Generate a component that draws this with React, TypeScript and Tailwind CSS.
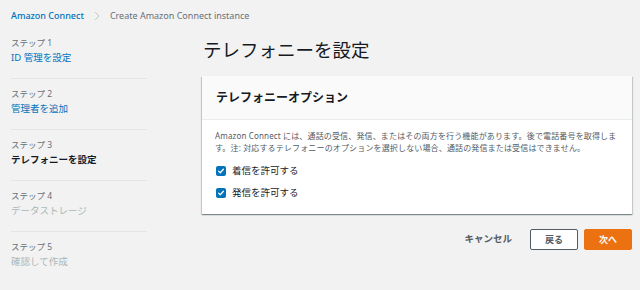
import React from "react";

const font = { fontFamily: '"Noto Sans", "Noto Sans CJK JP", sans-serif' };

type Step = {
  label: string;
  name: string;
  state: "done" | "active" | "todo";
};

const steps: Step[] = [
  { label: "ステップ 1", name: "ID 管理を設定", state: "done" },
  { label: "ステップ 2", name: "管理者を追加", state: "done" },
  { label: "ステップ 3", name: "テレフォニーを設定", state: "active" },
  { label: "ステップ 4", name: "データストレージ", state: "todo" },
  { label: "ステップ 5", name: "確認して作成", state: "todo" },
];

const nameClass = {
  done: "text-[#0073bb]",
  active: "text-[#16191f] font-bold",
  todo: "text-[#aab7b8]",
};

const CheckBox: React.FC<{ label: string }> = ({ label }) => (
  <label className="flex items-center gap-[6px] h-[16px]">
    <span className="w-[10px] h-[10px] rounded-[2px] bg-[#0073bb] flex items-center justify-center">
      <svg viewBox="0 0 10 10" className="w-[8px] h-[8px]">
        <path d="M2 5.2 L4.1 7.2 L8 2.8" fill="none" stroke="#fff" strokeWidth="1.6" strokeLinecap="round" strokeLinejoin="round" />
      </svg>
    </span>
    <span className="text-[9.5px] text-[#16191f] leading-[16px]">{label}</span>
  </label>
);

const App: React.FC = () => {
  return (
    <div className="w-full h-[290px] bg-[#f2f2f2] px-[11px] overflow-hidden" style={font}>
      {/* パンくず */}
      <div className="h-[28px] pt-[9px] flex items-start gap-[8px] text-[9px] leading-[14px]">
        <span className="text-[#0073bb] font-medium">Amazon Connect</span>
        <svg viewBox="0 0 8 12" className="w-[6px] h-[12px] mt-[1px] mx-[2px]">
          <path d="M1.5 1 L6.5 6 L1.5 11" fill="none" stroke="#aab7b8" strokeWidth="1" />
        </svg>
        <span className="text-[#687078]">Create Amazon Connect instance</span>
      </div>

      <div className="flex">
        {/* サイドバー */}
        <div className="w-[136px] shrink-0">
          {steps.map((s, i) => (
            <div
              key={s.label}
              className={`pt-[8px] ${i < steps.length - 1 ? "pb-[12px] border-b border-[#e4e6e6]" : ""}`}
            >
              <div className="text-[8.5px] leading-[14px] text-[#687078]">{s.label}</div>
              <div className={`text-[9.5px] leading-[16px] ${nameClass[s.state]}`}>{s.name}</div>
            </div>
          ))}
        </div>

        {/* メイン */}
        <div className="flex-1 ml-[55px] mr-[-3px] pt-[8px]">
          <h1 className="text-[18.5px] leading-[28px] text-[#16191f] pl-[1px]">テレフォニーを設定</h1>

          <div className="mt-[12px] bg-white shadow-[0_1px_1px_0_rgba(0,28,36,0.3),1px_1px_1px_0_rgba(0,28,36,0.15),-1px_1px_1px_0_rgba(0,28,36,0.15)]">
            <div className="h-[44px] bg-[#fafafa] border-b border-[#eaeded] px-[14px] flex items-center">
              <h2 className="text-[12px] font-bold text-[#16191f]">テレフォニーオプション</h2>
            </div>
            <div className="px-[13px] pt-[10px] pb-[13px]">
              <p className="text-[8px] tracking-[0.15px] leading-[12px] text-[#545b64]">
                Amazon Connect には、通話の受信、発信、またはその両方を行う機能があります。後で電話番号を取得します。注: 対応するテレフォニーのオプションを選択しない場合、通話の発信または受信はできません。
              </p>
              <div className="mt-[9px] flex flex-col gap-[6px] pl-[1px]">
                <CheckBox label="着信を許可する" />
                <CheckBox label="発信を許可する" />
              </div>
            </div>
          </div>

          <div className="mt-[15px] flex justify-end items-center gap-[6px]">
            <button className="h-[21px] px-[12px] text-[9.5px] font-bold text-[#545b64]">キャンセル</button>
            <button className="h-[21px] w-[48px] bg-white border border-[#545b64] rounded-[2px] text-[9px] font-bold text-[#545b64]">戻る</button>
            <button className="h-[21px] w-[48px] bg-[#ec7211] border border-[#ec7211] rounded-[2px] text-[9px] font-bold text-white">次へ</button>
          </div>
        </div>
      </div>
    </div>
  );
};

export default App;
